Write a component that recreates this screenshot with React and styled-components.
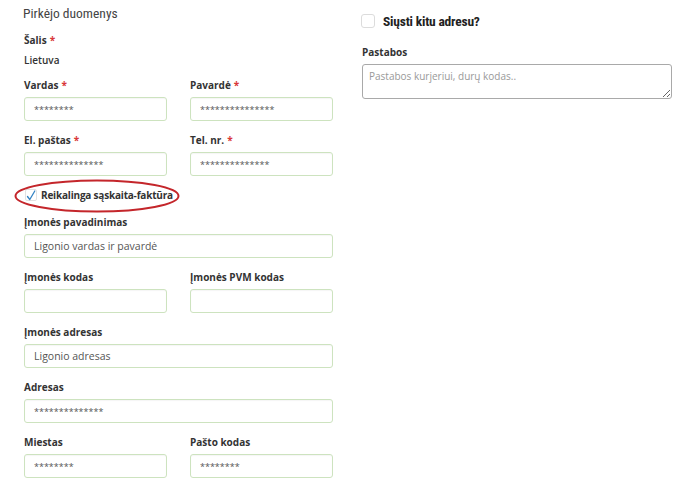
import React from "react";
import styled, { createGlobalStyle } from "styled-components";

const Global = createGlobalStyle`
  html, body { margin: 0; padding: 0; background: #fff; }
  body { font-family: "Open Sans", "Noto Sans", sans-serif; color: #333; }
  * { box-sizing: border-box; }
`;

const Page = styled.div`
  display: grid;
  grid-template-columns: 309px 310px;
  column-gap: 29px;
  padding-left: 24px;
  width: 700px;
  height: 481px;
  overflow: hidden;
`;

const Column = styled.div`
  display: flex;
  flex-direction: column;
`;

const Heading = styled.h2`
  margin: 0 0 0 -1px;
  padding-top: 4px;
  height: 33px;
  font-family: "Liberation Sans Narrow", "Roboto Condensed", "Liberation Sans", sans-serif;
  font-weight: 400;
  font-size: 13.5px;
  line-height: 19px;
  color: #444;
`;

const Label = styled.label`
  display: block;
  font-size: 10px;
  font-weight: 700;
  line-height: 14px;
  height: 14px;
  color: #333;
  white-space: nowrap;
`;

const Req = styled.span`
  color: #d9383a;
  margin-left: 3px;
`;

const Value = styled.div`
  margin-top: 6px;
  font-size: 10px;
  font-weight: 600;
  line-height: 14px;
  color: #333;
`;

const Row = styled.div`
  display: grid;
  grid-template-columns: ${(p) => (p.$split ? "143px 143px" : "1fr")};
  column-gap: 23px;
  margin-top: ${(p) => p.$mt ?? 12}px;
`;

const Field = styled.div`
  display: flex;
  flex-direction: column;
  gap: 5px;
`;

const Input = styled.input`
  width: 100%;
  height: 24px;
  border: 1px solid #cde3bf;
  border-radius: 3px;
  box-shadow: inset 0 1px 1px rgba(0, 0, 0, 0.04);
  padding: 0 0 0 9px;
  font-family: "Open Sans", "Noto Sans", sans-serif;
  font-size: ${(p) => (p.$masked ? "9px" : "10.5px")};
  color: #555;
  background: #fff;
  outline: none;
`;

const CheckRow = styled.div`
  position: relative;
  display: flex;
  align-items: center;
  gap: 4px;
  height: 14px;
  margin: 12px 0 13px 1px;
`;

const SmallBox = styled.span`
  position: relative;
  width: 12px;
  height: 12px;
  border: 1px solid #e2e2e2;
  border-radius: 2px;
  display: inline-flex;
  align-items: center;
  justify-content: center;
`;

const CheckMark = styled.svg`
  width: 10px;
  height: 11px;
`;

const CheckText = styled.span`
  font-size: 10px;
  font-weight: 700;
  letter-spacing: -0.2px;
  color: #333;
  line-height: 14px;
`;

const Ellipse = styled.svg`
  position: absolute;
  left: -11px;
  top: -9px;
  width: 166px;
  height: 34px;
  pointer-events: none;
`;

const RightTop = styled.div`
  display: flex;
  align-items: center;
  gap: 8px;
  margin: 14px 0 0 -1px;
  height: 14px;
`;

const BigBox = styled.span`
  width: 14px;
  height: 14px;
  border: 1px solid #dcdcdc;
  border-radius: 3px;
  background: #fff;
`;

const SubHeading = styled.span`
  font-family: "Liberation Sans Narrow", "Roboto Condensed", "Liberation Sans", sans-serif;
  font-weight: 700;
  font-size: 13.5px;
  letter-spacing: -0.2px;
  color: #222;
`;

const NotesField = styled.div`
  display: flex;
  flex-direction: column;
  gap: 5px;
  margin-top: 17px;
`;

const TextArea = styled.textarea`
  width: 310px;
  height: 35px;
  border: 1px solid #a9a9a9;
  border-radius: 3px;
  padding: 4px 6px;
  font-family: "Open Sans", "Noto Sans", sans-serif;
  font-size: 10px;
  color: #555;
  outline: none;
  &::placeholder { color: #999; }
`;

function TextField({ label, required, value, masked }) {
  return (
    <Field>
      <Label>
        {label}
        {required && <Req>*</Req>}
      </Label>
      <Input readOnly value={value} $masked={masked} />
    </Field>
  );
}

export default function App() {
  return (
    <>
      <Global />
      <Page>
        <Column>
          <Heading>Pirkėjo duomenys</Heading>
          <Label>
            Šalis<Req>*</Req>
          </Label>
          <Value>Lietuva</Value>
          <Row $split $mt={11}>
            <TextField label="Vardas" required value="********" masked />
            <TextField label="Pavardė" required value="***************" masked />
          </Row>
          <Row $split>
            <TextField label="El. paštas" required value="**************" masked />
            <TextField label="Tel. nr." required value="**************" masked />
          </Row>
          <CheckRow>
            <SmallBox>
              <CheckMark viewBox="0 0 10 11">
                <path d="M1.5 6.5 L3.8 9.5 L8.8 1" fill="none" stroke="#3483c4" strokeWidth="1.3" strokeLinecap="round" strokeLinejoin="round" />
              </CheckMark>
            </SmallBox>
            <CheckText>Reikalinga sąskaita-faktūra</CheckText>
            <Ellipse viewBox="0 0 166 34">
              <ellipse cx="83" cy="17" rx="81.5" ry="15.5" fill="none" stroke="#c4262b" strokeWidth="2" />
            </Ellipse>
          </CheckRow>
          <Row $mt={0}>
            <TextField label="Įmonės pavadinimas" value="Ligonio vardas ir pavardė" />
          </Row>
          <Row $split>
            <TextField label="Įmonės kodas" value="" />
            <TextField label="Įmonės PVM kodas" value="" />
          </Row>
          <Row>
            <TextField label="Įmonės adresas" value="Ligonio adresas" />
          </Row>
          <Row>
            <TextField label="Adresas" value="**************" masked />
          </Row>
          <Row $split>
            <TextField label="Miestas" value="********" masked />
            <TextField label="Pašto kodas" value="********" masked />
          </Row>
        </Column>
        <Column>
          <RightTop>
            <BigBox />
            <SubHeading>Siųsti kitu adresu?</SubHeading>
          </RightTop>
          <NotesField>
            <Label>Pastabos</Label>
            <TextArea placeholder="Pastabos kurjeriui, durų kodas.." />
          </NotesField>
        </Column>
      </Page>
    </>
  );
}
